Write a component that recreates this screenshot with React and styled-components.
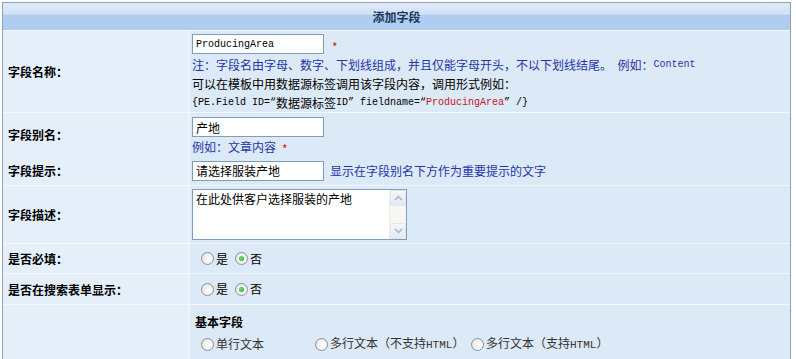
import React from 'react';
import styled, { createGlobalStyle } from 'styled-components';

const GlobalStyle = createGlobalStyle`
  html, body {
    margin: 0;
    padding: 0;
    background: #fff;
  }
  body {
    font-family: "Noto Sans CJK SC", "Liberation Sans", sans-serif;
    font-size: 12px;
    color: #000;
  }
`;

const Frame = styled.div`
  margin: 2px 5px 0 2px;
  border: 1px solid #8ca2bb;
  border-bottom: none;
  background: #f4f8fc;
  display: grid;
  gap: 1px;
`;

const Header = styled.div`
  height: 27px;
  display: flex;
  align-items: center;
  justify-content: center;
  font-weight: bold;
  font-size: 12px;
  color: #1b3660;
  background: linear-gradient(#dfeaf8 0%, #cfe1f5 42%, #afcdf0 44%, #afcdf0 100%);
`;

const Row = styled.div`
  display: grid;
  grid-template-columns: 186px 1fr;
  gap: 1px;
  height: ${(p) => p.h}px;
`;

const Label = styled.div`
  background: #e4eff9;
  padding-left: 5px;
  display: flex;
  align-items: center;
  font-weight: bold;
  font-size: 12px;
`;

const Value = styled.div`
  background: #dce9f6;
  padding: ${(p) => p.pad || '0 2px'};
  display: flex;
  flex-direction: column;
  justify-content: ${(p) => p.justify || 'center'};
`;

const Line = styled.div`
  display: flex;
  align-items: center;
  height: ${(p) => p.h || 19}px;
  color: ${(p) => p.color || '#000'};
  white-space: nowrap;
`;

const Mono = styled.span`
  font-family: "Liberation Mono", "DejaVu Sans Mono", monospace;
  font-size: ${(p) => p.size || 10}px;
  color: ${(p) => p.color || 'inherit'};
`;

const TextBox = styled.div`
  box-sizing: border-box;
  width: 132px;
  height: 20px;
  border: 1px solid #7f9db9;
  background: #fff;
  padding: 0 3px;
  display: flex;
  align-items: center;
  font-size: 12px;
`;

const Star = styled.span`
  color: #e0201c;
  font-size: 12px;
  margin-left: ${(p) => p.ml ?? 8}px;
  position: relative;
  top: 2px;
`;

const Hint = styled.span`
  color: #1f35a8;
  margin-left: 6px;
`;

const AreaBox = styled.div`
  box-sizing: border-box;
  width: 215px;
  height: 51px;
  border: 1px solid #7f9db9;
  background: #fff;
  display: flex;
`;

const AreaText = styled.div`
  flex: 1;
  padding: 1px 3px;
  line-height: 15px;
`;

const Scroll = styled.div`
  width: 16px;
  display: flex;
  flex-direction: column;
  justify-content: space-between;
  background: #f7f6f1;
  border-left: 1px solid #eeede5;
`;

const ScrollBtn = styled.div`
  height: 16px;
  box-sizing: border-box;
  border: 1px solid #e4e7ee;
  border-radius: 2px;
  background: linear-gradient(#f4f6fa, #e2e8f3);
  display: flex;
  align-items: center;
  justify-content: center;
`;

const RadioSet = styled.div`
  display: grid;
  grid-template-columns: ${(p) => p.cols || 'auto auto'};
  justify-content: start;
  column-gap: ${(p) => p.gap ?? 7}px;
  padding-left: ${(p) => p.pl ?? 9}px;
`;

const Option = styled.label`
  display: flex;
  align-items: center;
  gap: 2px;
  color: ${(p) => p.color || '#000'};
  white-space: nowrap;
`;

const OptionText = styled.span`
  line-height: 16px;
`;

const Dot = styled.span`
  box-sizing: border-box;
  width: 13px;
  height: 13px;
  flex: none;
  border-radius: 50%;
  border: 1px solid #8193a8;
  background: radial-gradient(circle at 60% 60%, #ffffff 0%, #f4f3ee 45%, #d8d8cf 100%);
  display: inline-flex;
  align-items: center;
  justify-content: center;

  &::after {
    content: '';
    width: 5px;
    height: 5px;
    border-radius: 50%;
    background: ${(p) => (p.$on ? 'radial-gradient(circle at 40% 40%, #7ce07c, #1d9a1d)' : 'transparent')};
  }
`;

const SubTitle = styled.div`
  font-weight: bold;
  height: 22px;
  display: flex;
  align-items: center;
  padding-left: 3px;
`;

const Chevron = ({ up }) => (
  <svg width="9" height="6" viewBox="0 0 9 6">
    <path
      d={up ? 'M1 5 L4.5 1.5 L8 5' : 'M1 1 L4.5 4.5 L8 1'}
      fill="none"
      stroke="#a9b6cb"
      strokeWidth="1.5"
    />
  </svg>
);

const Radio = ({ on, children, color }) => (
  <Option color={color}>
    <Dot $on={on} />
    <OptionText>{children}</OptionText>
  </Option>
);

const App = () => {
  return (
    <>
      <GlobalStyle />
      <Frame>
        <Header>添加字段</Header>

        <Row h={81}>
          <Label>字段名称：</Label>
          <Value pad="2px 2px 0" justify="flex-start">
            <Line h={22}>
              <TextBox>
                <Mono>ProducingArea</Mono>
              </TextBox>
              <Star>*</Star>
            </Line>
            <Line color="#1f35a8">
              注：字段名由字母、数字、下划线组成，并且仅能字母开头，不以下划线结尾。&nbsp;&nbsp;例如：<Mono>Content</Mono>
            </Line>
            <Line>可以在模板中用数据源标签调用该字段内容，调用形式例如：</Line>
            <Line>
              <Mono>{'{PE.Field ID=“'}</Mono>
              数据源标签
              <Mono>{'ID” fieldname=“'}</Mono>
              <Mono color="#c8141c">ProducingArea</Mono>
              <Mono>{'” /}'}</Mono>
            </Line>
          </Value>
        </Row>

        <Row h={42}>
          <Label>字段别名：</Label>
          <Value pad="4px 2px 0" justify="flex-start">
            <Line h={20}>
              <TextBox>产地</TextBox>
            </Line>
            <Line color="#1f35a8">
              例如：文章内容
              <Star ml={6}>*</Star>
            </Line>
          </Value>
        </Row>

        <Row h={29}>
          <Label>字段提示：</Label>
          <Value>
            <Line h={20}>
              <TextBox>请选择服装产地</TextBox>
              <Hint>显示在字段别名下方作为重要提示的文字</Hint>
            </Line>
          </Value>
        </Row>

        <Row h={57}>
          <Label>字段描述：</Label>
          <Value pad="3px 2px 0" justify="flex-start">
            <AreaBox>
              <AreaText>在此处供客户选择服装的产地</AreaText>
              <Scroll>
                <ScrollBtn>
                  <Chevron up />
                </ScrollBtn>
                <ScrollBtn>
                  <Chevron />
                </ScrollBtn>
              </Scroll>
            </AreaBox>
          </Value>
        </Row>

        <Row h={29}>
          <Label>是否必填：</Label>
          <Value>
            <RadioSet>
              <Radio>是</Radio>
              <Radio on>否</Radio>
            </RadioSet>
          </Value>
        </Row>

        <Row h={30}>
          <Label>是否在搜索表单显示：</Label>
          <Value>
            <RadioSet>
              <Radio>是</Radio>
              <Radio on>否</Radio>
            </RadioSet>
          </Value>
        </Row>

        <Row h={80}>
          <Label />
          <Value pad="5px 2px 0" justify="flex-start">
            <SubTitle>基本字段</SubTitle>
            <Line h={24}>
              <RadioSet cols="114px 156px auto" gap={0}>
                <Radio color="#333">单行文本</Radio>
                <Radio color="#333">
                  多行文本（不支持<Mono size={11}>HTML</Mono>）
                </Radio>
                <Radio color="#333">
                  多行文本（支持<Mono size={11}>HTML</Mono>）
                </Radio>
              </RadioSet>
            </Line>
          </Value>
        </Row>
      </Frame>
    </>
  );
};

export default App;
